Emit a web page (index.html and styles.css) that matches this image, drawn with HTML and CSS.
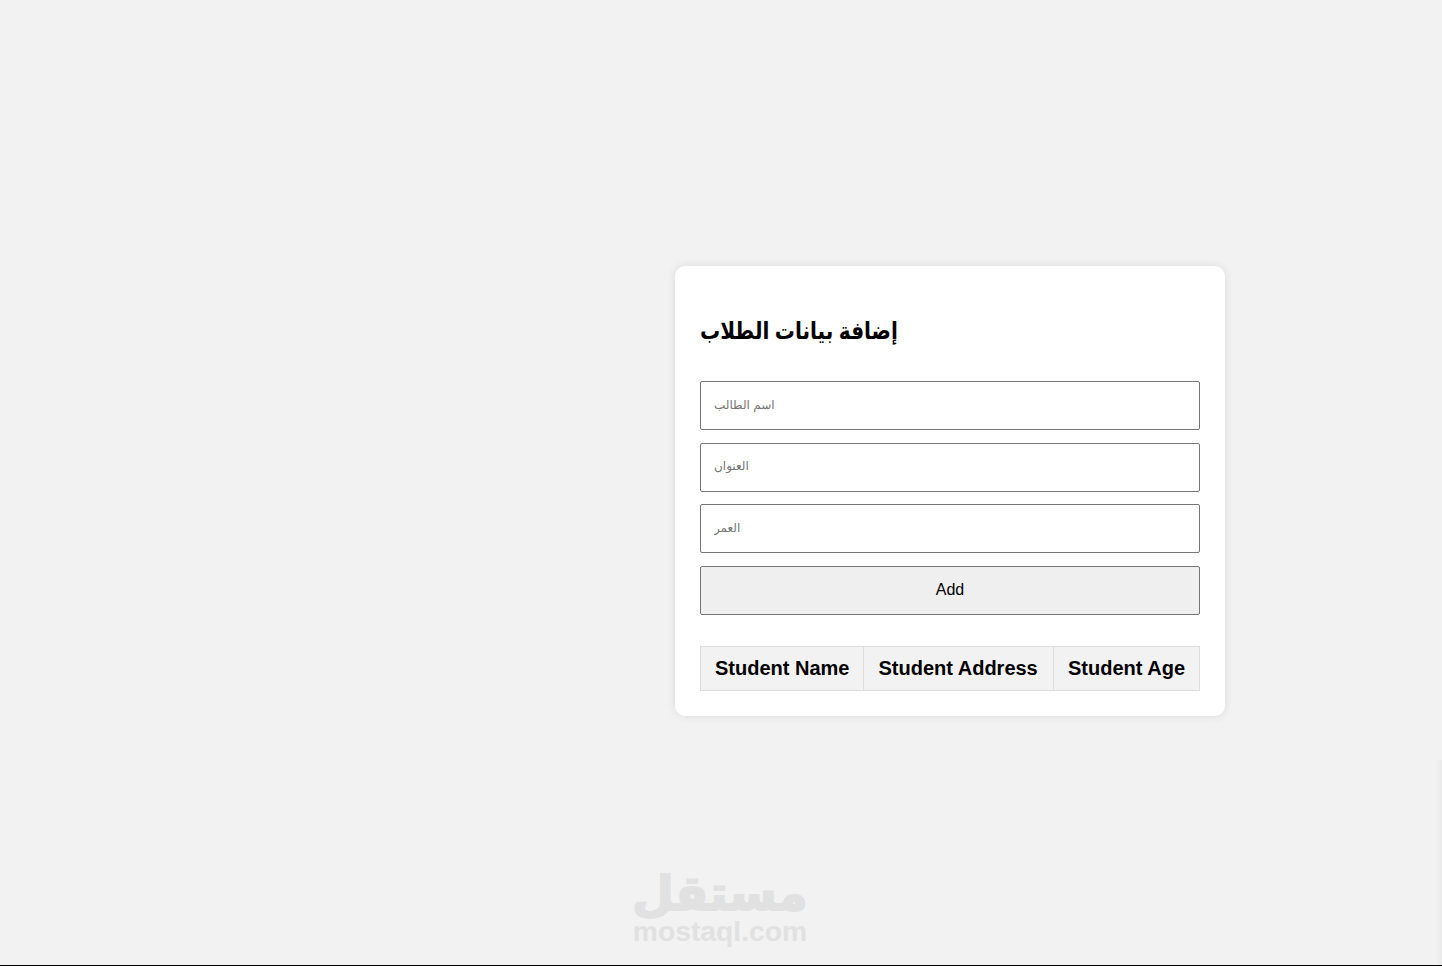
FILE: index.html
```html
<!DOCTYPE html>
<html>
    <head>
        <meta charset="utf-8">
        <link rel="stylesheet" href="styles.css">
        <title>Students</title>
    </head>
    <body>
        <div class="box">
            <h2 class="box-title">إضافة بيانات الطلاب</h2>

            <form class="student-form">
                <input class="field" type="text" placeholder="اسم الطالب">
                <input class="field" type="text" placeholder="العنوان">
                <input class="field" type="text" placeholder="العمر">
                <button class="add-btn" type="button">Add</button>
            </form>

            <table>
                <tr>
                    <th class="col-name">Student Name</th>
                    <th class="col-address">Student Address</th>
                    <th>Student Age</th>
                </tr>
            </table>
        </div>

        <div class="watermark">
            <span class="watermark-ar">مستقل</span>
            <span class="watermark-en">mostaql.com</span>
        </div>
        <div class="edge-shadow"></div>
    </body>
</html>
```

FILE: styles.css
```css
html, body {
    margin: 0;
    height: 100%;
}

body {
    box-sizing: border-box;
    height: 966px;
    padding: 266px 217px 0 0;
    display: flex;
    justify-content: flex-end;
    align-items: flex-start;
    background: #f2f2f2;
    border-bottom: 1px solid #000000;
    font-family: "Liberation Sans", "DejaVu Sans", sans-serif;
    overflow: hidden;
}

.box {
    box-sizing: border-box;
    width: 550px;
    padding: 25px;
    background: #ffffff;
    border-radius: 10px;
    box-shadow: 0 0 10px rgba(0, 0, 0, 0.1);
}

.box-title {
    margin: 20px 0 0 0;
    height: 70px;
    font-size: 24px;
    line-height: 40px;
    text-align: left;
    color: #000000;
    transform: scaleX(0.835);
    transform-origin: left center;
}

.student-form {
    display: flex;
    flex-direction: column;
    gap: 12.5px;
}

.field,
.add-btn {
    box-sizing: border-box;
    width: 100%;
    height: 49px;
    margin: 0;
    border: 1px solid #767676;
    border-radius: 2px;
    font-family: "Liberation Sans", "DejaVu Sans", sans-serif;
    font-size: 16px;
}

.field {
    padding: 0 13px 2px 13px;
    background: #ffffff;
    font-size: 12px;
}

.field::placeholder {
    color: #757575;
}

.add-btn {
    background: #efefef;
    color: #000000;
}

table {
    width: 100%;
    margin-top: 31.5px;
    border-collapse: collapse;
}

th {
    padding: 10px 14px;
    background: #f2f2f2;
    border: 1px solid #dddddd;
    font-size: 20px;
    line-height: 23px;
    text-align: left;
    white-space: nowrap;
}

.col-name {
    width: 134px;
}

.col-address {
    width: 161px;
}

/* bottom logo, sits over the page background */
.watermark {
    position: absolute;
    left: 620px;
    top: 860px;
    width: 200px;
    display: flex;
    flex-direction: column;
    align-items: center;
    color: #e1e1e1;
    font-weight: bold;
}

.watermark-ar {
    font-size: 48px;
    line-height: 68px;
    -webkit-text-stroke: 2px #e1e1e1;
}

.watermark-en {
    margin-top: -13px;
    font-size: 28.3px;
    line-height: 32px;
}

.edge-shadow {
    position: absolute;
    right: 0;
    top: 760px;
    width: 8px;
    height: 205px;
    background: linear-gradient(to right, rgba(0, 0, 0, 0), rgba(0, 0, 0, 0.03));
}
```
